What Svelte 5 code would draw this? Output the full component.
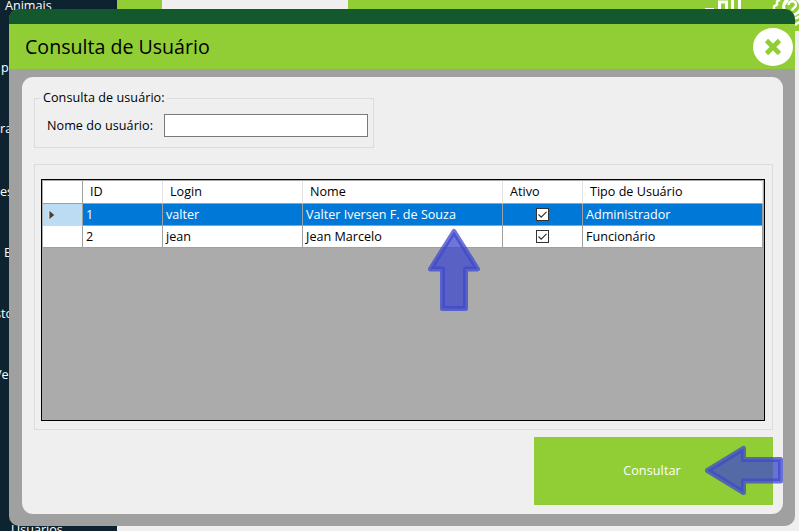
<script>
  const sidebar = [
    { label: 'Animais', x: 5, y: -3 },
    { label: 'p', x: 1, y: 59 },
    { label: 'ra', x: 0, y: 120 },
    { label: 'es', x: 0, y: 183 },
    { label: 'E', x: 4, y: 244 },
    { label: 'sto', x: -5, y: 305 },
    { label: 'Ve', x: -6, y: 366 },
    { label: 'Usuários', x: 11, y: 521 }
  ];
  const columns = ['ID', 'Login', 'Nome', 'Ativo', 'Tipo de Usuário'];
  const users = [
    { id: 1, login: 'valter', name: 'Valter Iversen F. de Souza', type: 'Administrador', selected: true },
    { id: 2, login: 'jean', name: 'Jean Marcelo', type: 'Funcionário', selected: false }
  ];
  let query = $state('');
</script>

<main class="screen">
  <div class="backdrop">
    <div class="side"></div>
    <div class="page">
      <div class="band"><i class="tab"></i></div>
    </div>
  </div>
  {#each sidebar as item}
    <span class="item" style="left:{item.x}px;top:{item.y}px">{item.label}</span>
  {/each}
  <svg class="decor" width="99" height="31" viewBox="0 0 99 31" fill="none" stroke="#fff">
    <path d="M5 9h9" stroke-width="2" />
    <path d="M19.500 10V2h7V10M32.500 0v10M39.500 0v10" stroke-width="3" />
    <path d="M80 0l-3 1.500v3l-3 2v3M84 10V5l4-5" stroke-width="2.400" />
    <circle cx="92" cy="6.500" r="8.500" stroke-width="2.600" />
    <path d="M88.500 5c0-5 7.500-5 7.500 0 0 3-3.800 2.500-3.800 5.500" stroke-width="2.400" />
    <path d="M95 18h2l2-2M95 25l4-3" stroke-width="2.400" />
  </svg>

  <section class="window">
    <div class="strip"></div>
    <header>
      <h1>Consulta de Usuário</h1>
      <button class="close" aria-label="Fechar">
        <svg width="40" height="38" viewBox="0 0 40 38"><path d="M13.500 12.500l13 13M26.500 12.500l-13 13" stroke="#91cd35" stroke-width="4.600" /></svg>
      </button>
    </header>
    <div class="content">
      <fieldset class="search">
        <legend>Consulta de usuário:</legend>
        <label for="q">Nome do usuário:</label>
        <input id="q" bind:value={query} />
      </fieldset>
      <div class="results">
        <div class="grid">
          <div class="row head">
            <div class="marker"></div>
            {#each columns as title}<div>{title}</div>{/each}
          </div>
          {#each users as u}
            <div class="row" class:selected={u.selected}>
              <div class="marker">
                {#if u.selected}
                  <svg width="8" height="12" viewBox="0 0 8 12"><path d="M1 1L6.800 6 1 11z" fill="#404040" stroke="#f4e8e0" stroke-width=".8" /></svg>
                {/if}
              </div>
              <div>{u.id}</div>
              <div>{u.login}</div>
              <div class="name">{u.name}</div>
              <div class="check">
                <svg width="13" height="13" viewBox="0 0 13 13"><rect x=".5" y=".5" width="12" height="12" fill="#fff" stroke="#333" /><path d="M2.500 6.500l2.700 2.700 5.300-5.300" fill="none" stroke="#333" stroke-width="1.200" /></svg>
              </div>
              <div>{u.type}</div>
            </div>
          {/each}
        </div>
      </div>
      <button class="go">Consultar</button>
    </div>
  </section>

  <svg class="arrows" width="799" height="531" viewBox="0 0 799 531">
    <polygon points="454,231.500 477.500,269 465.500,269 465.500,308.500 442.500,308.500 442.500,269 430.500,269" />
    <polygon points="707.500,470.500 743.500,448.500 743.500,459.500 780.500,459.500 780.500,481 743.500,481 743.500,492.500" />
  </svg>
</main>

<style>
  :global(body) { margin: 0; }
  .screen { position: relative; width: 799px; height: 531px; overflow: hidden; background: #efefef; color: #000; font: 12.600px/18px 'Open Sans', 'Noto Sans', sans-serif; }
  .screen * { box-sizing: border-box; }
  .backdrop { display: flex; height: 531px; }
  .side { width: 117px; background: #0d2430; }
  .page { flex: 1; background: #efefef; }
  .band { height: 31px; padding-left: 45px; background: #91cd35; }
  .tab { display: block; width: 186px; height: 31px; background: #efefef; }
  .item { position: absolute; color: #fff; white-space: nowrap; }
  .decor { position: absolute; left: 700px; top: 0; }
  .window { position: absolute; left: 9px; top: 9px; width: 786px; height: 517px; border-radius: 10px; overflow: hidden; background: #a0a0a0; }
  .strip { height: 15px; background: #14582d; }
  header { display: flex; height: 45px; padding: 0 2px 0 16px; align-items: center; justify-content: space-between; background: #91cd35; }
  h1 { margin: 0; font-size: 19.600px; font-weight: 400; line-height: 45px; white-space: nowrap; }
  .close { display: block; width: 40px; height: 38px; padding: 0; border: 0; border-radius: 50%; background: #fff; }
  .close svg { display: block; }
  .content { display: flex; flex-direction: column; width: 761px; height: 437px; margin: 8px 0 0 13px; padding: 13px 10px 9px 12px; border-radius: 11px; background: #efefef; }
  .search { display: flex; width: 340px; height: 58px; margin: 0; padding: 8px 5px 0 12px; border: 1px solid #dcdcdc; min-width: 0; }
  legend { height: 16px; margin-left: -6px; padding: 0 2px; line-height: 16px; letter-spacing: .05px; white-space: nowrap; }
  label { width: 117px; line-height: 23px; letter-spacing: .05px; white-space: nowrap; }
  input { width: 204px; height: 23px; padding: 2px 4px; border: 1px solid #7a7a7a; background: #fff; font: inherit; }
  .results { height: 266px; width: 739px; margin-top: 16px; padding: 14px 7px 8px 6px; border: 1px solid #dcdcdc; }
  .grid { width: 724px; height: 242px; padding: 1px; border: 1px solid #000; background: #ababab; }
  .row { display: grid; grid-template-columns: 40px 80px 140px 200px 80px 180px; width: 720px; height: 22px; background: #fff; }
  .row > div { padding-left: 3px; border-right: 1px solid #a0a0a0; border-bottom: 1px solid #a0a0a0; line-height: 21px; white-space: nowrap; }
  .row.head { height: 23px; }
  .row.head > div { padding-left: 7px; border-right-color: #e3e3e3; line-height: 21px; }
  .row.head > .marker { border-right-color: #a0a0a0; }
  .row.selected { background: #0078d7; color: #fff; }
  .row.selected .marker { border-bottom-color: #bcdcf4; background: #bcdcf4; }
  .row > .marker { display: flex; align-items: center; padding: 1px 0 0 5px; }
  .row > .check { display: flex; align-items: center; justify-content: center; padding: 0; }
  .go { align-self: flex-end; width: 239px; height: 68px; margin-top: 7px; padding: 0 3px 0 0; border: 0; background: #91cd35; color: #fff; font: inherit; letter-spacing: .1px; }
  .arrows { position: absolute; left: 0; top: 0; pointer-events: none; }
  .arrows polygon { fill: rgb(63 72 204 / .75); stroke: rgb(63 72 204 / .75); stroke-width: 5; stroke-linejoin: round; }
</style>
